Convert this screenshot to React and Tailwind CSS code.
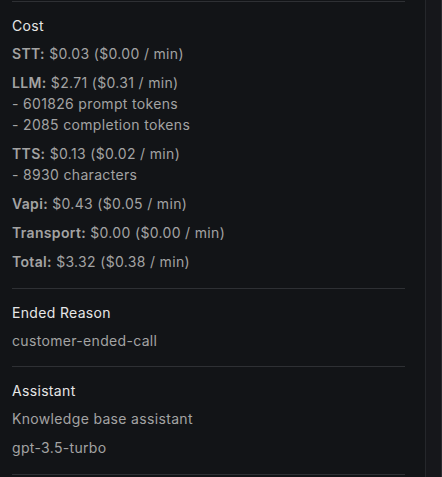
import React from "react";

const costs = [
  { label: "STT", value: "$0.03 ($0.00 / min)" },
  {
    label: "LLM",
    value: "$2.71 ($0.31 / min)",
    extra: ["- 601826 prompt tokens", "- 2085 completion tokens"],
  },
  { label: "TTS", value: "$0.13 ($0.02 / min)", extra: ["- 8930 characters"] },
  { label: "Vapi", value: "$0.43 ($0.05 / min)" },
  { label: "Transport", value: "$0.00 ($0.00 / min)" },
  { label: "Total", value: "$3.32 ($0.38 / min)" },
];

const Section = ({ title, className = "pb-4", children }) => (
  <div className={`border-t border-[#2e3034] pt-[13px] space-y-2 ${className}`}>
    <div className="h-5 leading-[22px] text-[#e6e6e6]">{title}</div>
    {children}
  </div>
);

const App = () => {
  return (
    <div
      className="flex h-[477px] w-[442px] overflow-hidden bg-[#121417] text-sm leading-[21px] tracking-[0.33px] text-[#a3a3a3]"
      style={{ fontFamily: "Inter, 'Noto Sans', sans-serif" }}
    >
      <div className="w-[425px] shrink-0 pl-3 pr-5 pt-px">
        <Section title="Cost">
          {costs.map((c) => (
            <div key={c.label}>
              <div>
                <span className="font-semibold">{c.label}:</span> {c.value}
              </div>
              {c.extra &&
                c.extra.map((e) => <div key={e}>{e}</div>)}
            </div>
          ))}
        </Section>

        <Section title="Ended Reason" className="pb-[15px]">
          <div>customer-ended-call</div>
        </Section>

        <Section title="Assistant">
          <div>Knowledge base assistant</div>
          <div>gpt-3.5-turbo</div>
        </Section>

        <div className="border-t border-[#2e3034]" />
      </div>

      <div className="w-px bg-[#25272b]" />
      <div className="flex-1 bg-[#16171b]" />
      <div className="w-px bg-[#2a2b30]" />
    </div>
  );
};

export default App;
